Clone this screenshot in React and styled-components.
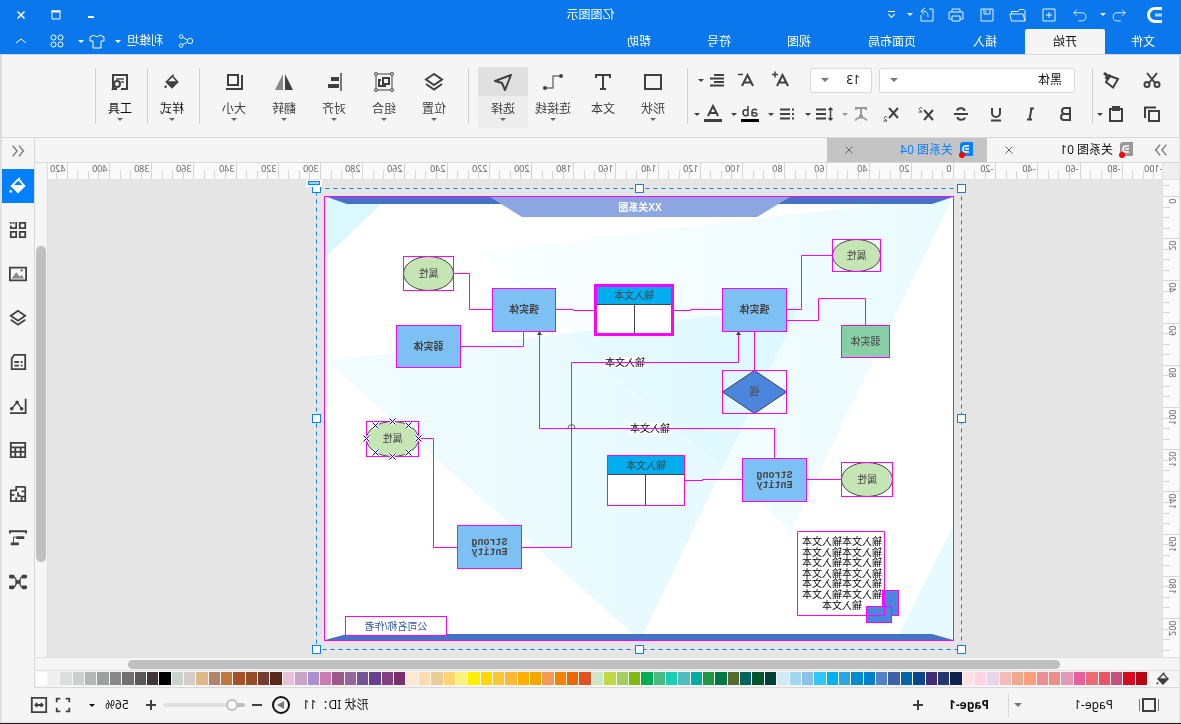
import React, { useState } from 'react'
import styled, { createGlobalStyle, css } from 'styled-components'

const tabs = [ '文件', '开始', '插入', '页面布局', '视图', '符号', '帮助' ]

const palette = [
    '#b80714', '#d90a1e', '#c84f7b', '#ea5464', '#ec6a70', '#e85e9f', '#e298b8', '#ee8e86', '#f08e98', '#ffa07a',
    '#efa98f', '#f7bcba', '#ead5e8', '#ffd2e4', '#ffe1e4', '#10204f', '#22386f', '#432c77', '#0a468c', '#0066a5',
    '#4060ac', '#5481c6', '#0080d0', '#008ccf', '#2ca6e0', '#00b2f0', '#30c8fa', '#8cc1ec', '#a0d8ef', '#d0eaf5',
    '#004035', '#00562c', '#006460', '#556b2f', '#007845', '#1f9640', '#00af9f', '#50bcc0', '#1accb4', '#48bb80',
    '#00ad52', '#80ba10', '#a3cf62', '#bfd843', '#cde6c7', '#e4501f', '#eb6800', '#f08300', '#f39a54', '#f2a600',
    '#ffae00', '#ffb836', '#fac932', '#ffd900', '#fff000', '#fff17f', '#ffd36f', '#eacc97', '#ffddab', '#fde8d0',
    '#7a2e70', '#833f82', '#684092', '#745497', '#98659c', '#9f5888', '#cb7cb0', '#ab90cf', '#c7a5ca', '#e9bfd9',
    '#5a281a', '#753c30', '#934d28', '#a65226', '#c0783f', '#b4846a', '#deb887', '#d4ccc7', '#c8d3ca', '#000000',
    '#403636', '#595757', '#707070', '#888888', '#9e9f9f', '#b5b6b6', '#cdcece', '#dcdddd', '#efefef', '#ffffff',
]

const range = ( from, to, step ) => {
    const out = []
    for ( let v = from; v <= to; v += step ) out.push( v )
    return out
}

/* icons, all on a 20 x 20 grid */
const icons = {
    undo: <path d="M6.500 4L3 7.500 6.500 11M3 7.500H12a4.500 4.500 0 0 1 0 9H8" />,
    redo: <path d="M13.500 4L17 7.500 13.500 11M17 7.500H8a4.500 4.500 0 0 0 0 9h4" />,
    add: <path d="M4 4h12v12H4zM10 7v6M7 10h6" />,
    open: <path d="M3 16V5.500L4 4.500h4.500L10 6.500h6.500V9M3 16L5 9h13l-1.500 7z" />,
    save: <path d="M4 4h12v12H4zM7 4v5h6V4M11 5.500v2" />,
    print: <path d="M6 7V4h8v3M6 14H3V7h14v7h-3M6 11h8v5H6z" />,
    exportDoc: <path d="M8 4H4v12h12v-6M9 12c0-4 1-6 6-6M12 3l4 3-3 3.500" />,
    share: <><circle cx="5.500" cy="10" r="3" /><circle cx="15.500" cy="5" r="2" /><circle cx="15.500" cy="15" r="2" /><path d="M8.500 9l5-3M8.500 11l5 3" /></>,
    shirt: <path d="M7 4L3 6v4h3v7h8v-7h3V6l-4-2c-1 2-5 2-6 0z" />,
    apps: <><circle cx="6.500" cy="6.500" r="2.500" /><circle cx="13.500" cy="6.500" r="2.500" /><circle cx="6.500" cy="13.500" r="2.500" /><circle cx="13.500" cy="13.500" r="2.500" /></>,
    up: <path d="M5 12l5-4 5 4" />,
    min: <path d="M7 12h6" strokeWidth="2" />,
    max: <><path d="M6 6h8v8H6z" /><path d="M5.500 6.500h9" strokeWidth="2" /></>,
    close: <path d="M6.500 6.500l7 7M13.500 6.500l-7 7" />,
    cut: <><circle cx="5" cy="14.500" r="2.500" /><circle cx="15" cy="14.500" r="2.500" /><path d="M7 13l8-10M13 13L5 3" /></>,
    painter: <><path d="M3 9l8-3 4 6-7 5.500z" /><path d="M9.500 6l4 5 3-3.500-1.500-1L18 4l-2-2-3 2.500L11.500 4z" fill="currentColor" stroke="none" /></>,
    copy: <path d="M3 7h10v10H3zM6 3.500h11V14" />,
    paste: <><path d="M4 5h12v12H4z" /><path d="M7 3h6v3H7z" /></>,
    bold: <path d="M6 4h5a3 3 0 0 1 0 6H6zM6 10h6a3 3 0 0 1 0 6H6z" />,
    italic: <path d="M7 4.500h4M9 15.500h5M9.500 4.500l2 11" />,
    underline: <path d="M6 4v5a4 4 0 0 0 8 0V4M5 16.500h10" />,
    strike: <path d="M3 10h14M14 6.500C13 3.500 6.500 3.500 6.500 7M6 13.500c1 3 7.500 3 7.500-.5" />,
    sup: <><path d="M3 6l9 10M12 6L3 16" /><path d="M14 4.500c1-2 3.500-.5 2.500 1L14 8h3.500" strokeWidth="1" /></>,
    sub: <><path d="M3 4l9 10M12 4L3 14" /><path d="M14 13.500c1-2 3.500-.5 2.500 1L14 17h3.500" strokeWidth="1" /></>,
    textEffect: <><path d="M5 6V4h10v2M10 4v8M8 12h4" /><path d="M4 16.500c3-4 9-4 12 0" strokeWidth="1.500" /></>,
    lineHeight: <><path d="M8 5.500h10M8 10h10M8 14.500h10" /><path d="M3.500 4v12M1.500 6l2-2 2 2M1.500 14l2 2 2-2" strokeWidth="1.500" /></>,
    list: <path d="M3 5.500h2M3 10h2M3 14.500h2M7 5.500h10M7 10h10M7 14.500h10" />,
    highlight: <><path d="M3 6c3-1.500 5-.5 5 1.500V12M8 9c-3-.5-5 0-5 1.500S6 13 8 11M12 2v10M12 7c1-2 5-2 5 1.500S13 13 12 10" strokeWidth="1.500" /><path d="M1 15h18v3H1z" fill="#000" stroke="none" /></>,
    fontColor: <><path d="M5 12l5-10 5 10M6.500 9h7" /><path d="M1 15h18v3H1z" fill="currentColor" stroke="none" /></>,
    bigger: <><path d="M4 16L9.500 5 15 16M6 12.500h7" /><path d="M14 4.500h6M17 1.500v6" strokeWidth="1.500" /></>,
    smaller: <><path d="M4 16L9.500 5 15 16M6 12.500h7" /><path d="M14 4.500h5" strokeWidth="1.500" /></>,
    align: <path d="M3 5h10M3 8.500h14M3 12h10M3 15.500h14" />,
    shape: <path d="M2 3h16v14H2z" />,
    text: <path d="M3 6V3h14v3M10 3v14M7 17h6" />,
    connector: <><path d="M4 4h6v12h6" stroke="#777" strokeWidth="1.500" /><circle cx="2" cy="4" r="2" fill="currentColor" stroke="none" /><circle cx="18" cy="16" r="2" fill="currentColor" stroke="none" /></>,
    select: <path d="M2 3l16 6-7 2-3 7z" strokeLinejoin="round" />,
    layers: <><path d="M10 2l8 5.500-8 5.500-8-5.500z" /><path d="M2 12l8 5.500 8-5.500" /></>,
    group: <><path d="M2 2h16v16H2z" strokeWidth="1" /><path d="M5 6h6v6H5z" /><path d="M13 8h2v6H9v-1" /><g fill="#f5f5f5" strokeWidth="1"><circle cx="2" cy="2" r="1.500" /><circle cx="18" cy="2" r="1.500" /><circle cx="2" cy="18" r="1.500" /><circle cx="18" cy="18" r="1.500" /></g></>,
    alignObj: <><path d="M3 1v18" stroke="#777" /><path d="M5 5h8v4H5zM5 12h11v4H5z" fill="currentColor" stroke="none" /></>,
    flip: <><path d="M9 2v16H1z" fill="currentColor" stroke="none" /><path d="M11 2v16h8z" fill="#888" stroke="none" /></>,
    size: <path d="M6 3h10v10H6zM2 3v14h16" />,
    bucket: <><path d="M9 3L3 10l7 7 7-7-7-7" /><path d="M4 10h12l-6 6z" fill="currentColor" /><path d="M8 1l3 3" /><circle cx="18" cy="16" r="1.500" fill="currentColor" stroke="none" /></>,
    tools: <><path d="M3 11V3h14v14h-4" /><path d="M6 7h8M6 10h3" stroke="#777" /><path d="M3 11v6h6" /><circle cx="13" cy="12" r="3" fill="#f5f5f5" /><path d="M15 14l3 4" /></>,
    collapse: <path d="M9 4L4 10l5 6M16 4l-5 6 5 6" strokeWidth="1.500" />,
    expand: <path d="M4 4l5 6-5 6M11 4l5 6-5 6" strokeWidth="1.500" />,
    grid: <><path d="M2 2h6v6H2zM2 12h6v6H2zM12 12h6v6h-6z" /><path d="M12 1v7h6V5M14 2h2M18 1v2" /></>,
    image: <><path d="M1 3h18v14H1z" /><path d="M3 15l3-4 2 2 4-5 5 7z" fill="#888" stroke="none" /><path d="M5 6h2" /></>,
    doc: <path d="M2 2h12l3 4v12H2zM5 10h2M9 10h5M5 14h2M9 14h5" />,
    chart: <><path d="M1.500 2v16H19" /><path d="M6 13l5-7 6 7" strokeWidth="1.500" /><g fill="currentColor" stroke="none"><circle cx="6" cy="13" r="2" /><circle cx="11" cy="6" r="2" /><circle cx="17" cy="13" r="2" /></g></>,
    table: <path d="M2 2h16v16H2zM2 7h16M2 12h16M7 7v11M13 7v11" />,
    floor: <path d="M2 2h10v4h6v12h-6v-4M2 2v16h10M2 7h4M10 8v4H7M2 13h4v5M14 11h4" />,
    gantt: <><path d="M1 5V2.500h18V5" /><path d="M3 8h9v3H3zM9 15h9v3H9z" fill="currentColor" stroke="none" /><path d="M12 9h3v7" strokeWidth="1" /></>,
    mind: <><path d="M3 4h2c3 0 2 6 5 6s2-6 5-6h2M3 16h2c3 0 2-6 5-6s2 6 5 6h2" strokeWidth="1.500" /><g fill="currentColor" stroke="none"><rect x="0" y="2" width="6" height="4" rx="1.500" /><rect x="14" y="2" width="6" height="4" rx="1.500" /><rect x="0" y="14" width="6" height="4" rx="1.500" /><rect x="14" y="14" width="6" height="4" rx="1.500" /><rect x="7" y="8" width="6" height="4" rx="1" /></g></>,
    pages: <><path d="M4 4h12v12H4z" /><path d="M0 4v12M20 4v12" stroke="#777" /></>,
    plus: <path d="M10 5v10M5 10h10" />,
    minus: <path d="M5 10h10" />,
    play: <><circle cx="10" cy="10" r="8" /><path d="M7 6l7 4-7 4z" fill="#777" stroke="none" /></>,
    fullscreen: <path d="M3 7V3h4M13 3h4v4M17 13v4h-4M7 17H3v-4" />,
    fitWidth: <path d="M2 2h16v16H2zM6 10h8M8 8l-2 2 2 2M12 8l2 2-2 2" />,
}

const Icon = ({ name, size = 20, weight = 2 }) => (
    <IconSvg width={ size } height={ size } viewBox="0 0 20 20" strokeWidth={ weight } aria-hidden="true">
        { icons[ name ] }
    </IconSvg>
)

const DocIcon = ({ color }) => (
    <IconSvg width="16" height="18" viewBox="0 0 16 18" aria-hidden="true">
        <path d="M2 1h11l2 2v12H2z" fill={ color } stroke="none" />
        <path d="M6 5h3a3 3 0 0 1 0 6H6M6 8h4" stroke="#fff" strokeWidth="1.500" />
        <circle cx="13" cy="14" r="3" fill="#f00" stroke="none" />
    </IconSvg>
)

const Tool = ({ icon, label, caret = true, active, size }) => (
    <ToolButton $active={ active }>
        <ToolIcon $active={ active }><Icon name={ icon } size={ size } /></ToolIcon>
        <span>{ label }</span>
        { caret && <Caret /> }
    </ToolButton>
)

const Split = ({ icon, label, muted }) => (
    <SplitButton aria-label={ label } $muted={ muted }>
        <Icon name={ icon } />
        <Caret />
    </SplitButton>
)

const HorizontalRuler = () => (
    <TopRuler aria-hidden="true">
        { range( -100, 425, 5 ).map(( v ) => {
            const x = Math.floor( 208.5 + v * 2.11 ) + 0.5
            const major = v % 20 === 0
            return (
                <g key={ v }>
                    <path d={ `M${ x } ${ major ? 0 : 8 }V16` } />
                    { major && <text x={ x + 2 } y="9">{ v }</text> }
                </g>
            )
        })}
    </TopRuler>
)

const VerticalRuler = () => (
    <SideRuler aria-hidden="true">
        { range( -5, 215, 5 ).map(( v ) => {
            const y = Math.floor( 16.5 + v * 2.11 ) + 0.5
            const major = v % 20 === 0
            return (
                <g key={ v }>
                    <path d={ `M${ major ? 0 : 9 } ${ y }H16` } />
                    { major && <text textAnchor="end" transform={ `translate(10 ${ y + 2 }) rotate(-90)` }>{ v }</text> }
                </g>
            )
        })}
    </SideRuler>
)

const Box = ({ x, y, w, h, fill = '#7dc1f4', lines = [], small }) => (
    <g>
        <rect x={ x } y={ y } width={ w } height={ h } fill={ fill } stroke="#f0f" />
        { lines.map(( line, i ) => (
            <text
                key={ line }
                x={ x + w / 2 }
                y={ y + h / 2 + 3 + ( i - ( lines.length - 1 ) / 2 ) * 10 }
                fontWeight={ small ? 400 : 700 }
            >
                { line }
            </text>
        ))}
    </g>
)

const Attribute = ({ x, y, w, h }) => (
    <g>
        <ellipse cx={ x + w / 2 } cy={ y + h / 2 } rx={ w / 2 } ry={ h / 2 } fill="#c5e5b4" stroke="#444" />
        <rect x={ x } y={ y } width={ w } height={ h } fill="none" stroke="#f0f" />
        <text x={ x + w / 2 } y={ y + h / 2 + 3 }>属性</text>
    </g>
)

const EntityTable = ({ x, y, w, h, split, thick }) => (
    <g>
        <rect x={ x } y={ y } width={ w } height={ h } fill="#fff" />
        <rect x={ x } y={ y } width={ w } height="19" fill="#00aeef" />
        <path d={ `M${ x } ${ y + 19 }h${ w }M${ split } ${ y + 19 }V${ y + h }` } stroke="#444" />
        <text x={ x + w / 2 } y={ y + 13 }>输入文本</text>
        <rect x={ x } y={ y } width={ w } height={ h } fill="none" stroke="#f0f" strokeWidth={ thick ? 3 : 1 } />
    </g>
)

const handles = [[ 219.5, 188.5 ], [ 541.5, 188.5 ], [ 864.5, 188.5 ], [ 219.5, 418.5 ], [ 864.5, 418.5 ], [ 219.5, 649.5 ], [ 541.5, 649.5 ], [ 864.5, 649.5 ]]
const anchors = [[ 788.5, 421.5 ], [ 772.5, 425.5 ], [ 805.5, 425.5 ], [ 762.5, 438.5 ], [ 814.5, 438.5 ], [ 772.5, 452.5 ], [ 805.5, 452.5 ], [ 788.5, 456.5 ]]

const Diagram = () => (
    <Drawing width="1114" height="477" viewBox="19 180 1114 477">
        <defs>
            <linearGradient id="facetA" x1="0" x2="1" y1="0" y2="0">
                <stop offset="0" stopColor="#eafbff" />
                <stop offset="1" stopColor="#fbffff" />
            </linearGradient>
            <linearGradient id="facetB" x1="0" x2="1" y1="0" y2="0">
                <stop offset="0" stopColor="#c8f4ff" stopOpacity="0.5" />
                <stop offset="1" stopColor="#e4faff" stopOpacity="0.5" />
            </linearGradient>
        </defs>
        <rect x="227.500" y="196.500" width="629" height="444" fill="#fff" />
        <path d="M228 197L390 530 704 252 301 204z" fill="url(#facetA)" />
        <path d="M854 361L381 306 538 635h9z" fill="url(#facetB)" />
        <path d="M856 198L800 204 856 258z" fill="#dbf7ff" />
        <path d="M228 526v114l54-6z" fill="#e6faff" />
        <path d="M854 197l-20 7H249l-21-7z" fill="#4472c4" />
        <path d="M691 197l-32 20H424l-33-20z" fill="#8ba6e0" />
        <path d="M856 640l-22-6H249l-21 6z" fill="#4472c4" />
        <text x="541" y="211" fontWeight="700" fill="#fff">XX关系图</text>
        <rect x="227.500" y="196.500" width="629" height="444" fill="none" stroke="#f0f" />

        <rect x="535" y="357" width="42" height="11" fill="#fff" />
        <rect x="510" y="423" width="42" height="11" fill="#fff" />
        <text x="556" y="366" fill="#000">输入文本</text>
        <text x="531" y="432" fill="#000">输入文本</text>
        <path d="M606 428a3 3 0 0 1 7 0" fill="none" stroke="#666" />

        <g fill="none" stroke="#f0f">
            <path d="M349 255.500H379.500V309.500H394M315.500 325V298.500H362.500V320.500H394" />
            <path d="M458 309.500H490.500V310.500H508M587 310.500H607.500V309.500H625M689 309.500H711.500V273.500H727" />
            <path d="M720 346.500H657.500V332M426.500 332V370M442.500 332V362.500H609.500V547.500H659" />
            <path d="M406.500 458V428.500H641.500V332M339 479.500H374M439 479.500H478.500V480.500H496M724 547.500H747.500V438.500H763" />
        </g>
        <path d="M442.500 331l2.500 4h-5zM641.500 331l2.500 4h-5z" fill="#444" />

        <Attribute x={ 300.5 } y={ 239.5 } w={ 48 } h={ 32 } />
        <Attribute x={ 727.5 } y={ 256.5 } w={ 50 } h={ 34 } />
        <Attribute x={ 288.5 } y={ 462.5 } w={ 51 } h={ 34 } />
        <Attribute x={ 762.5 } y={ 421.5 } w={ 52 } h={ 35 } />
        { anchors.map(([ x, y ]) => (
            <g key={ `${ x }-${ y }` } fill="none">
                <path d={ `M${ x - 3 } ${ y - 3 }l6 6m0-6l-6 6` } stroke="#fff" strokeWidth="3" />
                <path d={ `M${ x - 3 } ${ y - 3 }l6 6m0-6l-6 6` } stroke="#0000c8" />
            </g>
        ))}
        <Box x={ 291.5 } y={ 325.5 } w={ 48 } h={ 32 } fill="#88cfa8" lines={[ '弱实体' ]} small />
        <Box x={ 394.5 } y={ 288.5 } w={ 64 } h={ 43 } lines={[ '强实体' ]} />
        <Box x={ 625.5 } y={ 288.5 } w={ 63 } h={ 43 } lines={[ '强实体' ]} />
        <Box x={ 720.5 } y={ 325.5 } w={ 64 } h={ 42 } lines={[ '弱实体' ]} />
        <g fontFamily="'Liberation Mono', monospace">
            <Box x={ 374.5 } y={ 458.5 } w={ 64 } h={ 43 } lines={[ 'Strong', 'Entity' ]} />
            <Box x={ 659.5 } y={ 525.5 } w={ 64 } h={ 43 } lines={[ 'Strong', 'Entity' ]} />
        </g>
        <path d="M426.500 370.500l32 21.500-32 21.500-32-21.500z" fill="#4c86dc" stroke="#444" />
        <Box x={ 394.5 } y={ 370.5 } w={ 64 } h={ 43 } fill="none" lines={[ '强' ]} small />

        <EntityTable x={ 508.5 } y={ 285.5 } w={ 77 } h={ 49 } split={ 546.5 } thick />
        <EntityTable x={ 496.5 } y={ 455.5 } w={ 77 } h={ 50 } split={ 535.5 } />

        <rect x="282.500" y="590.500" width="16" height="25" fill="#4c86dc" stroke="#f0f" />
        <rect x="289.500" y="606.500" width="25" height="16" fill="#4c86dc" stroke="#f0f" />
        <path d="M296.500 531.500h87v84h-87zM296.500 590.500v25" fill="none" stroke="#f0f" />
        <g fill="#000">
            { range( 0, 5, 1 ).map(( i ) => <text key={ i } x="339" y={ 545 + Math.round( i * 10.6 ) }>输入文本输入文本</text> )}
            <text x="339" y="609">输入文本</text>
        </g>
        <rect x="734.500" y="616.500" width="101" height="19" fill="#fff" stroke="#f0f" />
        <text x="785" y="630" fill="#2f5aa8">公司名称/作者</text>

        <rect x="219.500" y="188.500" width="645" height="461" fill="none" stroke="#0a80f5" strokeDasharray="4 4" />
        { handles.map(([ x, y ]) => (
            <rect key={ `${ x }-${ y }` } x={ x - 4 } y={ y - 4 } width="8" height="8" fill="#fff" stroke="#0a80f5" />
        ))}
        <rect x="859" y="180" width="16" height="7" fill="#fff" />
        <rect x="861.500" y="181.500" width="11" height="3" fill="#9fd0ff" stroke="#0a80f5" />
    </Drawing>
)

const sideTools = [ 'bucket', 'grid', 'image', 'layers', 'doc', 'chart', 'table', 'floor', 'gantt', 'mind' ]

const App = () => {
    const [ tab, setTab ] = useState( '开始' )
    const [ panel, setPanel ] = useState( 'bucket' )

    return (
        <Window>
            <GlobalStyle />
            <Header>
                <TitleBar>
                    <QuickBar>
                        <Logo viewBox="0 0 16 18" aria-label="logo">
                            <path d="M1 2.500h7a6.500 6.500 0 0 1 0 13H1" stroke="#fff" strokeWidth="3" />
                            <path d="M1 9h7" stroke="#a9d3ff" strokeWidth="3" />
                        </Logo>
                        <QuickButton $split aria-label="撤销"><Icon name="undo" size={ 18 } weight={ 1 } /><Caret /></QuickButton>
                        <QuickButton aria-label="重做"><Icon name="redo" size={ 18 } weight={ 1 } /></QuickButton>
                        <QuickButton aria-label="新建"><Icon name="add" weight={ 1 } /></QuickButton>
                        <QuickButton aria-label="打开"><Icon name="open" weight={ 1 } /></QuickButton>
                        <QuickButton aria-label="保存"><Icon name="save" weight={ 1 } /></QuickButton>
                        <QuickButton aria-label="打印"><Icon name="print" weight={ 1 } /></QuickButton>
                        <QuickButton $split aria-label="导出"><Icon name="exportDoc" weight={ 1 } /><Caret /></QuickButton>
                        <MoreButton aria-label="更多"><Caret $bar /></MoreButton>
                    </QuickBar>
                    <Title>亿图图示</Title>
                    <WindowButtons>
                        <button aria-label="最小化"><Icon name="min" weight={ 1 } /></button>
                        <button aria-label="最大化"><Icon name="max" weight={ 1 } /></button>
                        <button aria-label="关闭"><Icon name="close" weight={ 1.5 } /></button>
                    </WindowButtons>
                </TitleBar>
                <MenuBar>
                    { tabs.map(( item ) => (
                        <MenuTab key={ item } $active={ item === tab } onClick={() => setTab( item )}>{ item }</MenuTab>
                    ))}
                    <Account>
                        <Icon name="share" size={ 18 } weight={ 1 } />
                        <UserButton>利维坦<Caret /></UserButton>
                        <SkinButton aria-label="皮肤"><Icon name="shirt" size={ 20 } weight={ 1 } /><Caret /></SkinButton>
                        <Icon name="apps" weight={ 1 } />
                        <FoldButton aria-label="收起"><Icon name="up" weight={ 1 } /></FoldButton>
                    </Account>
                </MenuBar>
            </Header>

            <Ribbon>
                <ClipGroup>
                    <FlatButton aria-label="剪切"><Icon name="cut" /></FlatButton>
                    <FlatButton aria-label="格式刷"><Icon name="painter" /></FlatButton>
                    <FlatButton aria-label="复制"><Icon name="copy" /></FlatButton>
                    <Split icon="paste" label="粘贴" />
                </ClipGroup>
                <FontGroup>
                    <FontRow $top>
                        <FieldWrap $grow><Field aria-label="字体" defaultValue="黑体" /><Caret $large /></FieldWrap>
                        <FieldWrap><Field aria-label="字号" defaultValue="13" $center /><Caret $large /></FieldWrap>
                        <FontTools>
                            <FlatButton aria-label="增大字号"><Icon name="bigger" /></FlatButton>
                            <FlatButton aria-label="减小字号"><Icon name="smaller" /></FlatButton>
                            <Split icon="align" label="对齐方式" />
                        </FontTools>
                    </FontRow>
                    <FontRow>
                        <FlatButton aria-label="加粗"><Icon name="bold" /></FlatButton>
                        <FlatButton aria-label="斜体"><Icon name="italic" /></FlatButton>
                        <FlatButton aria-label="下划线"><Icon name="underline" /></FlatButton>
                        <FlatButton aria-label="删除线"><Icon name="strike" /></FlatButton>
                        <FlatButton aria-label="上标"><Icon name="sup" /></FlatButton>
                        <FlatButton aria-label="下标"><Icon name="sub" /></FlatButton>
                        <Split icon="textEffect" label="文字效果" muted />
                        <Split icon="lineHeight" label="行距" />
                        <Split icon="list" label="列表" />
                        <Split icon="highlight" label="高亮" />
                        <Split icon="fontColor" label="字体颜色" />
                    </FontRow>
                </FontGroup>
                <ToolGroup>
                    <Tool icon="shape" label="形状" />
                    <Tool icon="text" label="文本" caret={ false } />
                    <Tool icon="connector" label="连接线" />
                    <Tool icon="select" label="选择" active />
                </ToolGroup>
                <ToolGroup>
                    <Tool icon="layers" label="位置" />
                    <Tool icon="group" label="组合" />
                    <Tool icon="alignObj" label="对齐" />
                    <Tool icon="flip" label="翻转" />
                    <Tool icon="size" label="大小" />
                </ToolGroup>
                <ToolGroup $dark><Tool icon="bucket" label="样式" size={ 16 } /></ToolGroup>
                <ToolGroup $dark><Tool icon="tools" label="工具" /></ToolGroup>
            </Ribbon>

            <Workspace>
                <Main>
                    <FileTabs>
                        <PanelToggle aria-label="展开面板"><Icon name="expand" size={ 18 } /></PanelToggle>
                        <FileTab>
                            <DocIcon color="#999" />
                            <span>关系图 01</span>
                            <button aria-label="关闭"><Icon name="close" weight={ 1 } /></button>
                        </FileTab>
                        <FileTab $active>
                            <DocIcon color="#0a80ff" />
                            <span>关系图 04</span>
                            <button aria-label="关闭"><Icon name="close" weight={ 1 } /></button>
                        </FileTab>
                    </FileTabs>
                    <CanvasGrid>
                        <Corner />
                        <HorizontalRuler />
                        <VScroll><i /></VScroll>
                        <VerticalRuler />
                        <Canvas><Diagram /></Canvas>
                    </CanvasGrid>
                    <HScroll><i /></HScroll>
                    <PaletteRow>
                        <PaletteIcon><Icon name="bucket" size={ 14 } /></PaletteIcon>
                        { palette.map(( color ) => <Swatch key={ color } aria-label={ color } $color={ color } /> )}
                    </PaletteRow>
                </Main>
                <SideBar>
                    <SideHead aria-label="收起面板"><Icon name="collapse" size={ 18 } /></SideHead>
                    { sideTools.map(( item ) => (
                        <SideButton key={ item } aria-label={ item } $active={ item === panel } onClick={() => setPanel( item )}>
                            <span><Icon name={ item } size={ 18 } /></span>
                        </SideButton>
                    ))}
                </SideBar>
            </Workspace>

            <StatusBar>
                <PageIcon><Icon name="pages" /></PageIcon>
                <PageSelect><span>Page-1</span><Caret $large /></PageSelect>
                <PageTab>Page-1</PageTab>
                <IconButton aria-label="新建页"><Icon name="plus" /></IconButton>
                <StatusRight>
                    <span>形状 ID：11</span>
                    <ZoomGroup>
                        <Icon name="play" />
                        <IconButton aria-label="缩小"><Icon name="minus" /></IconButton>
                        <Slider type="range" aria-label="缩放" min="0" max="100" defaultValue="10" />
                        <IconButton aria-label="放大"><Icon name="plus" /></IconButton>
                    </ZoomGroup>
                    <ZoomValue>56%<Caret /></ZoomValue>
                    <ViewButtons>
                        <IconButton aria-label="全屏"><Icon name="fullscreen" size={ 18 } /></IconButton>
                        <IconButton aria-label="适应宽度"><Icon name="fitWidth" size={ 18 } /></IconButton>
                    </ViewButtons>
                </StatusRight>
            </StatusBar>
        </Window>
    )
}

const GlobalStyle = createGlobalStyle`
    * { box-sizing: border-box; }

    body {
        margin: 0;
        background: #f5f5f5;
        color: #111;
        font: 12px/16px "Noto Sans", "Noto Sans CJK SC", sans-serif;
    }

    button {
        display: flex;
        align-items: center;
        justify-content: center;
        flex-shrink: 0;
        padding: 0;
        border: 0;
        background: none;
        color: inherit;
        font: inherit;
        cursor: pointer;
    }
`

const line = '1px solid #d9d9d9'

/* the whole window runs right to left, glyphs included */
const Window = styled.div`
    display: flex;
    flex-direction: column;
    min-height: 100vh;
    overflow: hidden;
    transform: scaleX(-1);
    border-bottom: 1px solid #222;
`

const IconSvg = styled.svg`
    display: block;
    flex-shrink: 0;
    fill: none;
    stroke: currentColor;
`

const Caret = styled.i`
    flex-shrink: 0;
    width: 0;
    height: 0;
    border: solid transparent;
    border-width: ${({ $large }) => $large ? '4px 4px 0' : '3px 3px 0' };
    border-top-color: ${({ $large }) => $large ? '#777' : 'currentColor' };

    ${({ $bar }) => $bar && css`
        width: 7px;
        height: 7px;
        border-width: 1px 0 0;
        border-color: #fff;

        &::after {
            content: "";
            display: block;
            width: 4px;
            height: 4px;
            margin: 0 auto;
            border: solid #fff;
            border-width: 0 1px 1px 0;
            transform: rotate(45deg);
        }
    `}
`

const Header = styled.header`
    background: #0a78ec;
    color: #fff;
`

const TitleBar = styled.div`
    display: grid;
    grid-template-columns: 1fr auto 1fr;
    align-items: center;
    height: 29px;
`

const QuickBar = styled.div`
    display: flex;
    align-items: center;
    padding-left: 18px;
`

const Logo = styled.svg`
    width: 16px;
    height: 18px;
    margin-right: 14px;
    fill: none;
`

const QuickButton = styled.button`
    width: ${({ $split }) => $split ? '37px' : '31px' };
    gap: 4px;
    opacity: 0.9;
`

const MoreButton = styled.button`
    width: 24px;
`

const Title = styled.span`
    text-align: center;
`

const WindowButtons = styled.div`
    display: flex;
    justify-content: flex-end;
    gap: 15px;
    padding-right: 11px;
`

const MenuBar = styled.nav`
    display: flex;
    align-items: stretch;
    height: 25px;
`

const MenuTab = styled.button`
    min-width: 80px;
    padding: 0 ${({ children }) => children.length > 2 ? 29 : 20 }px;
    border-radius: 2px 2px 0 0;
    background: ${({ $active }) => $active ? '#f5f5f5' : 'transparent' };
    color: ${({ $active }) => $active ? '#111' : '#fff' };

    &:first-child { min-width: 76px; }
`

const Account = styled.div`
    display: flex;
    align-items: center;
    margin-left: auto;
    padding-right: 11px;
    padding-bottom: 1px;
`

const UserButton = styled.button`
    gap: 6px;
    margin-left: 14px;
`

const SkinButton = styled.button`
    gap: 3px;
    margin: 0 11px 0 8px;
`

const FoldButton = styled.button`
    margin-left: 16px;
`

const Ribbon = styled.section`
    display: flex;
    height: 84px;
    padding-top: 12px;
    border: solid #d9d9d9;
    border-width: 1px 2px;
    color: #404040;
`

const group = css`
    position: relative;
    height: 60px;

    &::after {
        content: "";
        position: absolute;
        top: 1px;
        right: 0;
        width: 1px;
        height: 56px;
        background: #d0d0d0;
    }
`

const ClipGroup = styled.div`
    ${ group }
    display: grid;
    grid-template-columns: 41px 37px;
    align-content: space-between;
    width: 87px;
    padding-left: 9px;
`

const FontGroup = styled.div`
    ${ group }
    display: grid;
    align-content: space-between;
    width: 405px;
    padding-left: 8px;
`

const FontRow = styled.div`
    display: flex;
    align-items: center;
    height: 26px;
    gap: ${({ $top }) => $top ? '7px' : 0 };
    padding-left: ${({ $top }) => $top ? '9px' : 0 };
`

const FontTools = styled.div`
    display: flex;
    padding-left: 3px;
`

const FlatButton = styled.button`
    width: 35px;
    height: 26px;
`

const IconButton = styled.button`
    width: 24px;
    height: 24px;
    color: #404040;
`

const SplitButton = styled.button`
    justify-content: flex-start;
    gap: 3px;
    width: 37px;
    height: 26px;
    padding-left: 3px;
    color: ${({ $muted }) => $muted ? '#999' : '#404040' };
`

const FieldWrap = styled.label`
    display: flex;
    align-items: center;
    width: ${({ $grow }) => $grow ? '196px' : '62px' };
    height: 25px;
    padding-right: 10px;
    border: ${ line };
    border-radius: 2px;
    background: #fff;
`

const Field = styled.input`
    flex: 1;
    min-width: 0;
    padding: 0 ${({ $center }) => $center ? '11px' : '12px' };
    border: 0;
    outline: 0;
    background: none;
    color: #111;
    font: inherit;
`

const ToolGroup = styled.div`
    ${ group }
    display: flex;
    padding: 0 ${({ $dark }) => $dark ? '0 0 2px' : '10px 0 9px' };
    color: ${({ $dark }) => $dark ? '#111' : '#404040' };
`

const ToolButton = styled.button`
    flex-direction: column;
    justify-content: flex-start;
    width: 50px;
    height: 61px;
    border-radius: 2px;
    background: ${({ $active }) => $active ? '#ededed' : 'transparent' };

    span { margin: 5px 0 1px; }
    ${ Caret } { color: #666; }
`

const ToolIcon = styled.div`
    display: flex;
    align-items: center;
    justify-content: center;
    width: 100%;
    height: 29px;
    background: ${({ $active }) => $active ? '#e0e0e0' : 'transparent' };
    color: #404040;
`

const Workspace = styled.div`
    display: flex;
    flex: 1;
    border: solid #e0e0e0;
    border-width: 0 2px;
`

const Main = styled.main`
    display: flex;
    flex: 1;
    flex-direction: column;
    min-width: 0;
`

const FileTabs = styled.div`
    display: flex;
    height: 25px;
    padding-left: 4px;
    border-bottom: ${ line };
`

const PanelToggle = styled.button`
    width: 28px;
    color: #777;
`

const FileTab = styled.div`
    display: flex;
    align-items: center;
    width: 160px;
    padding: 0 12px;
    background: ${({ $active }) => $active ? '#c4c4c4' : 'transparent' };
    color: ${({ $active }) => $active ? '#0a80ff' : '#111' };

    span { flex: 1; padding-left: 6px; }
    button { color: #666; }
`

const CanvasGrid = styled.div`
    display: grid;
    flex: 1;
    grid-template-columns: 17px 1fr 13px;
    grid-template-rows: 17px 1fr;
    min-height: 477px;
`

const Corner = styled.div`
    border: solid #e0e0e0;
    border-width: 0 1px 1px 0;
    background: #efefef;
`

const ruler = css`
    width: 100%;
    height: 100%;
    overflow: hidden;
    background: #fafafa;
    fill: #666;
    font: 9px "Noto Sans", sans-serif;

    path { stroke: #d4d4d4; }
`

const TopRuler = styled.svg`
    ${ ruler }
    border-bottom: 1px solid #e0e0e0;
`

const SideRuler = styled.svg`
    ${ ruler }
    border-right: 1px solid #e0e0e0;
    height: 0;
    min-height: 100%;
`

const VScroll = styled.div`
    grid-row: 1 / 3;
    grid-column: 3;
    padding: 83px 1px 0 1px;
    border-left: 1px solid #e0e0e0;

    i {
        display: block;
        height: 316px;
        border-radius: 5px;
        background: #bfbfbf;
    }
`

const Canvas = styled.div`
    min-width: 0;
    overflow: hidden;
    background: #e5e5e5;
`

const Drawing = styled.svg`
    display: block;
    font-family: "Liberation Sans", "Noto Sans CJK SC", sans-serif;
    font-size: 10px;
    fill: #444;
    text-anchor: middle;
`

const HScroll = styled.div`
    height: 14px;
    padding: 2px 93px 0 119px;
    border: solid #e0e0e0;
    border-width: 1px 0;

    i {
        display: block;
        height: 9px;
        border-radius: 5px;
        background: #bfbfbf;
    }
`

const PaletteRow = styled.div`
    display: flex;
    gap: 1px;
    height: 17px;
    padding: 1px 1px 2px 0;
    border-bottom: ${ line };
`

const PaletteIcon = styled.div`
    display: flex;
    justify-content: center;
    width: 31px;
    color: #404040;
`

const Swatch = styled.button`
    flex: 1;
    background: ${({ $color }) => $color };
`

const SideBar = styled.aside`
    width: 33px;
    border-left: ${ line };
    color: #404040;
`

const SideHead = styled.button`
    width: 100%;
    height: 26px;
    color: #777;
`

const SideButton = styled.button`
    width: 100%;
    height: 44px;

    span {
        display: flex;
        align-items: center;
        justify-content: center;
        width: 100%;
        height: 34px;
        background: ${({ $active }) => $active ? '#0080ff' : 'transparent' };
        color: ${({ $active }) => $active ? '#fff' : 'inherit' };
    }
`

const StatusBar = styled.footer`
    display: flex;
    align-items: center;
    height: 35px;
    border: solid #e0e0e0;
    border-width: 0 2px 1px;
    color: #111;
`

const PageIcon = styled.div`
    padding: 0 26px 0 20px;
    color: #404040;
`

const PageSelect = styled.button`
    justify-content: space-between;
    width: 105px;
    height: 24px;
    padding-right: 5px;
    border-right: ${ line };
`

const PageTab = styled.button`
    width: 78px;
    font-weight: 700;
`

const StatusRight = styled.div`
    display: flex;
    align-items: center;
    margin-left: auto;
    padding-right: 25px;
    gap: 10px;
`

const ZoomGroup = styled.div`
    display: flex;
    align-items: center;
    width: 154px;
    padding-left: 2px;

    > svg { margin-right: 2px; }
`

const Slider = styled.input`
    flex: 1;
    min-width: 0;
    height: 12px;
    margin: 0;
    appearance: none;
    background: none;

    &::-webkit-slider-runnable-track {
        height: 4px;
        border-radius: 2px;
        background: linear-gradient(90deg, #bfbfbf 14%, #e0e0e0 14%);
    }

    &::-webkit-slider-thumb {
        appearance: none;
        width: 12px;
        height: 12px;
        margin-top: -4px;
        border: 2px solid #bfbfbf;
        border-radius: 50%;
        background: #fff;
    }
`

const ZoomValue = styled.button`
    gap: 10px;
    padding-right: 4px;
`

const ViewButtons = styled.div`
    display: flex;
`

export default App
